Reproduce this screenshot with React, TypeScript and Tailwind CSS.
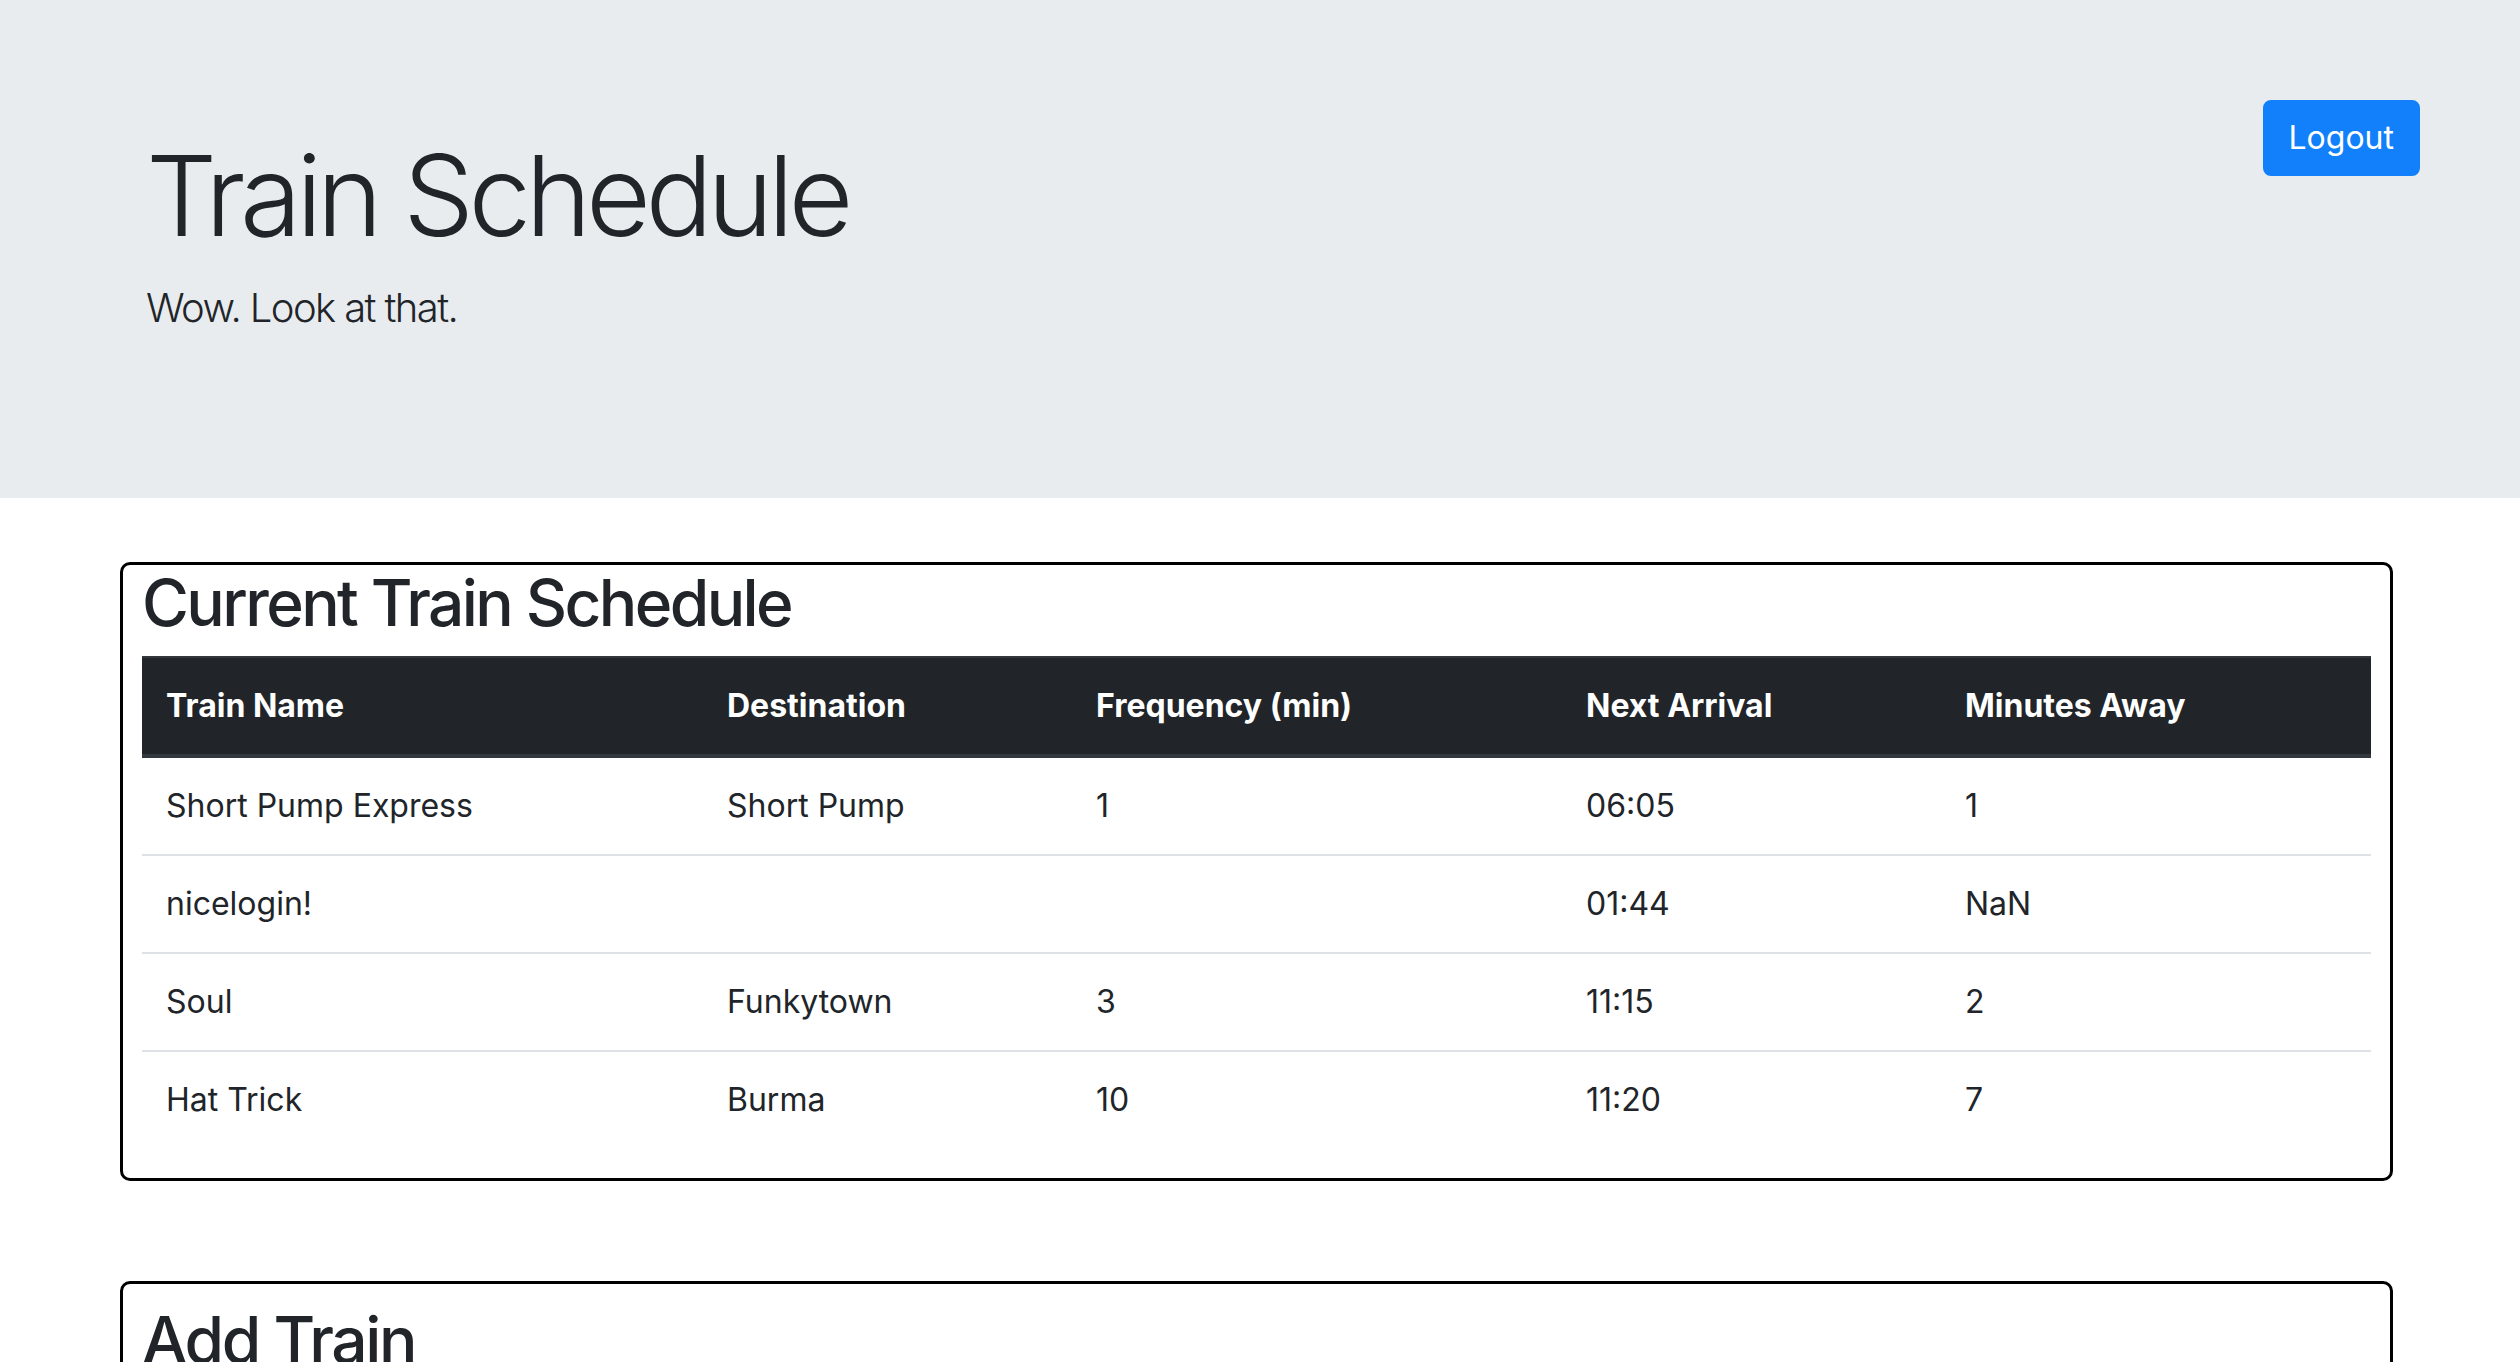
import React from 'react';

const trains = [
  { name: 'Short Pump Express', destination: 'Short Pump', frequency: '1', next: '06:05', away: '1' },
  { name: 'nicelogin!', destination: '', frequency: '', next: '01:44', away: 'NaN' },
  { name: 'Soul', destination: 'Funkytown', frequency: '3', next: '11:15', away: '2' },
  { name: 'Hat Trick', destination: 'Burma', frequency: '10', next: '11:20', away: '7' },
];

const headers = ['Train Name', 'Destination', 'Frequency (min)', 'Next Arrival', 'Minutes Away'];

export default function App() {
  return (
    <div className="min-h-screen bg-white text-[#212529] font-['Inter','Noto_Sans',sans-serif]">
      {/* Jumbotron */}
      <div className="flex justify-between bg-[#e9ecef] pl-[146px] pr-[100px] pt-[128px] pb-[128px]">
        <div>
          <h1 className="mb-[16px] text-[112px] font-light leading-[1.2] tracking-[-5.5px]">Train Schedule</h1>
          <p className="mb-[32px] text-[40px] font-light leading-[1.5] tracking-[-1.6px]">Wow. Look at that.</p>
        </div>
        <div className="-mt-[28px]">
          <button className="rounded-[8px] border-2 border-[#127ffb] bg-[#127ffb] px-[24px] py-[12px] text-[32px] leading-[48px] text-white">
            Logout
          </button>
        </div>
      </div>

      <div className="pl-[120px] pr-[127px] pt-[64px] pb-[40px]">
        {/* Current schedule */}
        <div className="rounded-[10px] border-[3px] border-black px-[19px]">
          <h2 className="mb-[14px] text-[64px] font-medium leading-[1.2] tracking-[-2.6px]">Current Train Schedule</h2>
          <table className="mb-[30px] w-full table-fixed border-collapse text-[32px]">
            <colgroup>
              <col className="w-[561px]" />
              <col className="w-[369px]" />
              <col className="w-[490px]" />
              <col className="w-[379px]" />
              <col />
            </colgroup>
            <thead>
              <tr className="bg-[#212529] text-white">
                {headers.map((h) => (
                  <th
                    key={h}
                    className="border-t-2 border-b-4 border-t-[#32383e] border-b-[#32383e] px-[24px] py-[24px] text-left font-bold leading-[48px]"
                  >
                    {h}
                  </th>
                ))}
              </tr>
            </thead>
            <tbody>
              {trains.map((t, i) => (
                <tr key={t.name} className={i === 0 ? '' : 'border-t-2 border-[#dee2e6]'}>
                  <td className="px-[24px] py-[24px] leading-[48px]">{t.name}</td>
                  <td className="px-[24px] py-[24px] leading-[48px]">{t.destination}</td>
                  <td className="px-[24px] py-[24px] leading-[48px]">{t.frequency}</td>
                  <td className="px-[24px] py-[24px] leading-[48px]">{t.next}</td>
                  <td className="px-[24px] py-[24px] leading-[48px]">{t.away}</td>
                </tr>
              ))}
            </tbody>
          </table>
        </div>

        {/* Add train */}
        <div className="mt-[100px] min-h-[400px] rounded-[10px] border-[3px] border-black px-[19px] pt-[18px]">
          <h2 className="mb-[14px] text-[64px] font-medium leading-[1.2] tracking-[-2.4px]">Add Train</h2>
        </div>
      </div>
    </div>
  );
}
